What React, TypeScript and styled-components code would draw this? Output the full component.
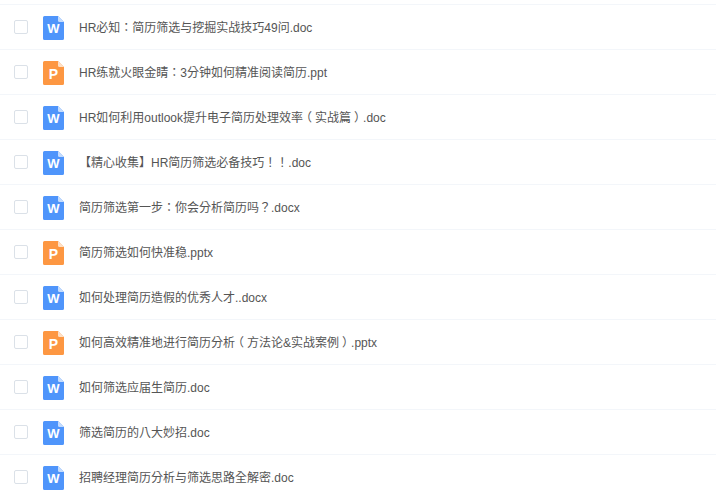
import React from "react";
import styled, { createGlobalStyle } from "styled-components";

const Global = createGlobalStyle`
  html, body { margin: 0; padding: 0; background: #fff; overflow: hidden; }
  body { font-family: "Liberation Sans", "Noto Sans CJK TC", sans-serif; }
`;

const List = styled.div`
  width: 716px;
  height: 499px;
  padding-top: 4px;
  box-sizing: border-box;
  overflow: hidden;
`;

const Row = styled.div`
  height: 45px;
  box-sizing: border-box;
  border-top: 1px solid #f3f6fa;
  display: flex;
  align-items: center;
  padding-left: 14px;
`;

const Check = styled.span`
  width: 14px;
  height: 14px;
  box-sizing: border-box;
  border: 1px solid #dbe1e8;
  border-radius: 2px;
  background: #fff;
  flex: none;
`;

const IconWrap = styled.span`
  margin: 2px 0 0 15px;
  width: 21px;
  height: 24px;
  flex: none;
  display: block;
  position: relative;
`;

const IconSvg = styled.svg`
  display: block;
`;

const IconLetter = styled.span<{ $size: number }>`
  position: absolute;
  left: 0;
  right: 0;
  top: 5px;
  text-align: center;
  font: 700 ${(p) => p.$size}px/16px "Liberation Sans", sans-serif;
  color: #fff;
`;

const Name = styled.span`
  margin-left: 15px;
  padding-top: 2px;
  font-size: 12px;
  line-height: 18px;
  color: #555;
  white-space: nowrap;
`;

const Paren = styled.span`
  font-feature-settings: "halt";
  padding: 0 3px;
`;

const FileIcon = ({ kind }: { kind: "W" | "P" }) => {
  const color = kind === "W" ? "#4f95fb" : "#fd9742";
  const fold = kind === "W" ? "#c4dcfe" : "#fee0c6";
  return (
    <IconWrap>
      <IconSvg width="21" height="24" viewBox="0 0 21 24">
        <path d="M1.5 0H15L21 6V22.5a1.5 1.5 0 0 1-1.5 1.5H1.5A1.5 1.5 0 0 1 0 22.5V1.5A1.5 1.5 0 0 1 1.5 0Z" fill={color} />
        <path d="M15 0L21 6H16.5A1.5 1.5 0 0 1 15 4.5Z" fill={fold} />
      </IconSvg>
      <IconLetter $size={kind === "W" ? 13 : 14}>{kind}</IconLetter>
    </IconWrap>
  );
};

const FileName = ({ text }: { text: string }) => (
  <Name>
    {text.split(/([（）])/).map((part, i) =>
      part === "（" || part === "）" ? <Paren key={i}>{part}</Paren> : part
    )}
  </Name>
);

const files: { kind: "W" | "P"; name: string }[] = [
  { kind: "W", name: "HR必知：简历筛选与挖掘实战技巧49问.doc" },
  { kind: "P", name: "HR练就火眼金睛：3分钟如何精准阅读简历.ppt" },
  { kind: "W", name: "HR如何利用outlook提升电子简历处理效率（实战篇）.doc" },
  { kind: "W", name: "【精心收集】HR简历筛选必备技巧！！.doc" },
  { kind: "W", name: "简历筛选第一步：你会分析简历吗？.docx" },
  { kind: "P", name: "简历筛选如何快准稳.pptx" },
  { kind: "W", name: "如何处理简历造假的优秀人才..docx" },
  { kind: "P", name: "如何高效精准地进行简历分析（方法论&实战案例）.pptx" },
  { kind: "W", name: "如何筛选应届生简历.doc" },
  { kind: "W", name: "筛选简历的八大妙招.doc" },
  { kind: "W", name: "招聘经理简历分析与筛选思路全解密.doc" },
];

export default function App() {
  return (
    <>
      <Global />
      <List>
        {files.map((f) => (
          <Row key={f.name}>
            <Check />
            <FileIcon kind={f.kind} />
            <FileName text={f.name} />
          </Row>
        ))}
      </List>
    </>
  );
}
